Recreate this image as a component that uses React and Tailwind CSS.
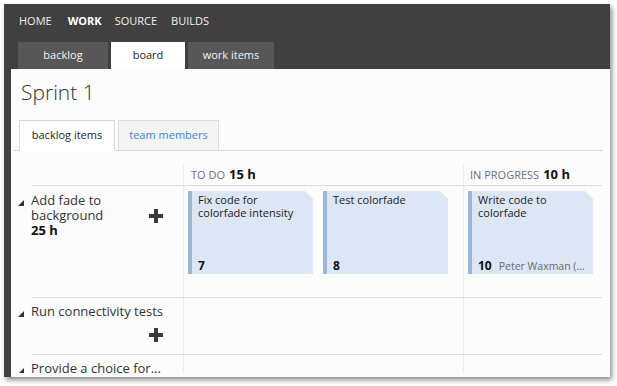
import React from "react";

const font = { fontFamily: '"Segoe UI", "Open Sans", "Noto Sans", sans-serif' };

function Tri() {
  return (
    <svg width="6" height="6" viewBox="0 0 6 6" className="shrink-0">
      <polygon points="0,6 6,0 6,6" fill="#333" />
    </svg>
  );
}

function Plus() {
  return (
    <svg width="14" height="14" viewBox="0 0 14 14" className="shrink-0">
      <rect x="5" y="0" width="4" height="14" fill="#3a3a3a" />
      <rect x="0" y="5" width="14" height="4" fill="#3a3a3a" />
    </svg>
  );
}

function Card({ title, num, who }) {
  return (
    <div className="w-[125px] h-[83px] bg-[#dce6f4] border-l-[4px] border-[#9cb6da] pl-[6px] pr-[3px] pt-[2px] pb-[1px] flex flex-col justify-between [clip-path:polygon(0_0,117px_0,125px_8px,125px_100%,0_100%)]">
      <div className="mr-[8px] text-[11px] leading-[13px] text-[#222]">{title}</div>
      <div className="flex items-baseline text-[11px] leading-[14px] whitespace-nowrap">
        <span className="font-bold text-[12px] text-[#111]">{num}</span>
        {who && <span className="ml-[7px] text-[10.5px] text-[#6a6a6a] overflow-hidden">{who}</span>}
      </div>
    </div>
  );
}

export default function App() {
  return (
    <div className="w-[617px] h-[386px] bg-white pt-[4px] pl-[4px]" style={font}>
      <div className="w-[606px] h-[373px] bg-[#404040] flex flex-col overflow-hidden shadow-[2px_3px_5px_rgba(0,0,0,0.45)]">
        <nav className="h-[38px] flex items-start pt-[9px] pl-[15px] text-[11px] leading-[16px] text-[#f0f0f0]">
          <span>HOME</span>
          <span className="ml-[16px] font-bold text-white">WORK</span>
          <span className="ml-[13px]">SOURCE</span>
          <span className="ml-[14px]">BUILDS</span>
        </nav>
        <div className="h-[27px] flex pl-[14px] gap-[3px] text-[11px]">
          <div className="w-[90px] bg-[#575757] text-[#f2f2f2] flex items-center justify-center">backlog</div>
          <div className="w-[74px] bg-white text-[#222] flex items-center justify-center">board</div>
          <div className="w-[86px] bg-[#575757] text-[#f2f2f2] flex items-center justify-center">work items</div>
        </div>
        <div className="flex-1 ml-[7px] bg-[#fcfcfc] pl-[2px] pb-[4px] flex flex-col min-h-0">
          <div className="pl-[8px] pt-[9px] text-[21px] leading-[28px] font-light text-[#333]">Sprint 1</div>
          <div className="mt-[14px] w-[590px] flex pl-[6px] gap-[3px] border-b border-[#dadada] text-[11px]">
            <div className="-mb-px h-[31px] w-[96px] bg-white border border-[#d8d8d8] border-b-white flex items-center justify-center text-[#222]">backlog items</div>
            <div className="h-[30px] w-[101px] bg-[#f4f4f4] border border-[#dcdcdc] border-b-0 flex items-center justify-center text-[#3c82dc]">team members</div>
          </div>
          <div className="flex-1 min-h-0 overflow-hidden">
            <div className="h-[14px]" />
            <div className="grid grid-cols-[170px_280px_139px] h-[20px]">
              <div className="ml-[19px] border-b border-[#dcdcdc]" />
              <div className="border-l border-b border-l-[#ebebeb] border-b-[#dcdcdc] pl-[7px] flex items-center whitespace-nowrap">
                <span className="text-[11px] text-[#707070]">TO DO</span>
                <span className="ml-[4px] text-[13px] font-bold text-[#111]">15 h</span>
              </div>
              <div className="border-l border-b border-l-[#ebebeb] border-b-[#dcdcdc] pl-[6px] flex items-center whitespace-nowrap">
                <span className="text-[11px] text-[#707070]">IN PROGRESS</span>
                <span className="ml-[4px] text-[13px] font-bold text-[#111]">10 h</span>
              </div>
            </div>

            <div className="grid grid-cols-[170px_280px_139px] h-[113px]">
              <div className="ml-[19px] border-b border-[#dcdcdc] pt-[8px] pr-[20px]">
                <div className="-ml-[14px] flex items-start text-[13px] leading-[15px] text-[#333]">
                  <div className="mt-[7px] mr-[7px]"><Tri /></div>
                  <div className="w-[104px]">
                    <div>Add fade to background</div>
                    <div className="font-bold text-[#111]">25 h</div>
                  </div>
                  <div className="flex-1" />
                  <div className="mt-[16px]"><Plus /></div>
                </div>
              </div>
              <div className="border-l border-b border-l-[#ebebeb] border-b-[#dcdcdc] pl-[4px] pt-[6px] flex gap-[10px]">
                <Card title="Fix code for colorfade intensity" num="7" />
                <Card title="Test colorfade" num="8" />
              </div>
              <div className="border-l border-b border-l-[#ebebeb] border-b-[#dcdcdc] pl-[4px] pt-[6px]">
                <Card title="Write code to colorfade" num="10" who="Peter Waxman (..." />
              </div>
            </div>

            <div className="grid grid-cols-[170px_280px_139px] h-[57px]">
              <div className="ml-[19px] border-b border-[#dcdcdc] pt-[6px] pr-[20px]">
                <div className="-ml-[14px] flex items-start text-[13px] leading-[15px] text-[#333] whitespace-nowrap">
                  <div className="mt-[7px] mr-[7px]"><Tri /></div>
                  <div>Run connectivity tests</div>
                </div>
                <div className="flex justify-end mt-[9px]"><Plus /></div>
              </div>
              <div className="border-l border-b border-l-[#ebebeb] border-b-[#dcdcdc]" />
              <div className="border-l border-b border-l-[#ebebeb] border-b-[#dcdcdc]" />
            </div>

            <div className="grid grid-cols-[170px_280px_139px] h-[60px]">
              <div className="ml-[19px] pt-[6px] pr-[20px]">
                <div className="-ml-[14px] flex items-start text-[13px] leading-[15px] text-[#333] whitespace-nowrap">
                  <div className="mt-[7px] mr-[7px]"><Tri /></div>
                  <div>Provide a choice for...</div>
                </div>
              </div>
              <div className="border-l border-[#ebebeb]" />
              <div className="border-l border-[#ebebeb]" />
            </div>
          </div>
        </div>
      </div>
    </div>
  );
}
